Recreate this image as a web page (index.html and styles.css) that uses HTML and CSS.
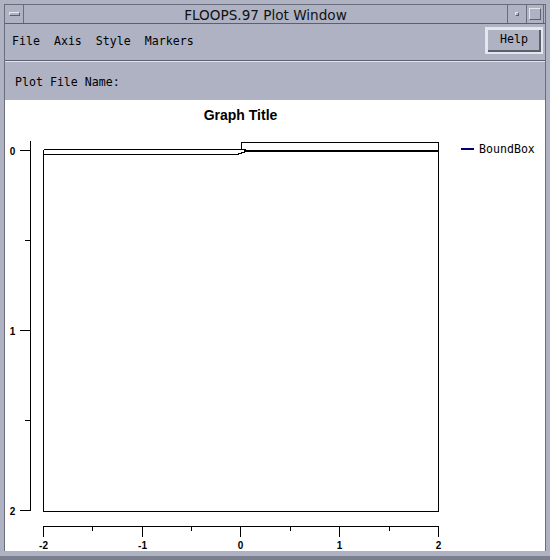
FILE: index.html
```html
<!DOCTYPE html>
<html lang="en">
<head>
    <meta charset="UTF-8" />
    <title>FLOOPS.97 Plot Window</title>
    <link rel="stylesheet" href="styles.css">
</head>
<body>
    <div class="window">
        <div class="inner">
            <div class="titlebar">
                <div class="tb-btn tb-menu"><span class="bar"></span></div>
                <div class="tb-title">FLOOPS.97 Plot Window</div>
                <div class="tb-btn tb-min"><span class="dot"></span></div>
                <div class="tb-btn tb-max"><span class="sq"></span></div>
            </div>
            <div class="menubar">
                <nav class="menus">
                    <span>File</span>
                    <span>Axis</span>
                    <span>Style</span>
                    <span>Markers</span>
                </nav>
                <button class="help">Help</button>
            </div>
            <div class="filebar">Plot File Name:</div>
            <div class="plot">
                <svg width="540" height="451" viewBox="5 100 540 451">
                    <text class="graph-title" x="240.5" y="119.5">Graph Title</text>

                    <!-- y axis -->
                    <g class="axis">
                        <line x1="30.5" y1="141" x2="30.5" y2="511" />
                        <line x1="20" y1="150.5" x2="30" y2="150.5" />
                        <line x1="25" y1="240.5" x2="30" y2="240.5" />
                        <line x1="20" y1="330.5" x2="30" y2="330.5" />
                        <line x1="25" y1="420.5" x2="30" y2="420.5" />
                        <line x1="20" y1="510.5" x2="30" y2="510.5" />
                    </g>
                    <text class="tick" x="12.5" y="154.5">0</text>
                    <text class="tick" x="12.5" y="334.5">1</text>
                    <text class="tick" x="12.5" y="514.5">2</text>

                    <!-- x axis -->
                    <g class="axis">
                        <line x1="43.5" y1="526.5" x2="438.5" y2="526.5" />
                        <line x1="43.5" y1="526" x2="43.5" y2="537" />
                        <line x1="92.5" y1="526" x2="92.5" y2="531" />
                        <line x1="142.5" y1="526" x2="142.5" y2="537" />
                        <line x1="191.5" y1="526" x2="191.5" y2="531" />
                        <line x1="240.5" y1="526" x2="240.5" y2="537" />
                        <line x1="290.5" y1="526" x2="290.5" y2="531" />
                        <line x1="339.5" y1="526" x2="339.5" y2="537" />
                        <line x1="389.5" y1="526" x2="389.5" y2="531" />
                        <line x1="438.5" y1="526" x2="438.5" y2="537" />
                    </g>
                    <text class="tick" x="43.5" y="548.5">-2</text>
                    <text class="tick" x="142.5" y="548.5">-1</text>
                    <text class="tick" x="240.5" y="548.5">0</text>
                    <text class="tick" x="339.5" y="548.5">1</text>
                    <text class="tick" x="438.5" y="548.5">2</text>

                    <!-- structure outline -->
                    <g class="outline">
                        <polyline points="43.5,149.5 43.5,511.5 438.5,511.5 438.5,142.5 241.5,142.5 241.5,149.5 43.5,149.5" />
                        <polyline points="43.5,154.5 237,154.5 246,151.5" />
                        <polyline points="241.5,149.5 250,150.5" />
                        <line class="thick" x1="244" y1="151" x2="438" y2="151" />
                    </g>

                    <!-- legend -->
                    <line class="legend-line" x1="461" y1="149" x2="474" y2="149" />
                    <text class="legend" x="479" y="153">BoundBox</text>
                </svg>
            </div>
        </div>
    </div>
</body>
</html>
```

FILE: styles.css
```css
* {
    margin: 0;
    padding: 0;
    box-sizing: border-box;
}

body {
    width: 550px;
    height: 560px;
    background-color: #aeb2c3;
}

.window {
    width: 550px;
    height: 560px;
    background-color: #aeb2c3;
    padding: 4px 4px 5px 4px;
    border-bottom: 4px solid #7c7f8e;
    display: flex;
}

.inner {
    flex: 1;
    display: flex;
    flex-direction: column;
    border-left: 1px solid #6a6d7b;
    border-right: 1px solid #6a6d7b;
}

.titlebar {
    height: 20px;
    display: flex;
    border-top: 1px solid #6a6d7b;
    border-bottom: 1px solid #5c5f6c;
}

.tb-btn {
    display: flex;
    align-items: center;
    justify-content: center;
}

.tb-menu {
    width: 19px;
    border-right: 1px solid #6a6d7b;
}

.tb-menu .bar {
    width: 11px;
    height: 4px;
    border-top: 1px solid #e6e8ef;
    border-left: 1px solid #e6e8ef;
    border-right: 1px solid #5c5f6c;
    border-bottom: 1px solid #5c5f6c;
}

.tb-title {
    flex: 1;
    text-align: center;
    font-family: "DejaVu Sans", sans-serif;
    font-size: 13.6px;
    line-height: 19px;
    color: #111;
    padding-top: 1px;
}

.tb-min {
    width: 19px;
    border-left: 1px solid #6a6d7b;
}

.tb-min .dot {
    width: 4px;
    height: 4px;
    border-top: 1px solid #e6e8ef;
    border-left: 1px solid #e6e8ef;
    border-right: 1px solid #5c5f6c;
    border-bottom: 1px solid #5c5f6c;
}

.tb-max {
    width: 18px;
    border-left: 1px solid #6a6d7b;
    border-right: 1px solid #6a6d7b;
    margin-right: 1px;
}

.tb-max .sq {
    width: 12px;
    height: 12px;
    border-top: 1px solid #e6e8ef;
    border-left: 1px solid #e6e8ef;
    border-right: 1px solid #5c5f6c;
    border-bottom: 1px solid #5c5f6c;
}

.menubar {
    height: 37px;
    display: flex;
    justify-content: space-between;
    align-items: flex-start;
    border-bottom: 1px solid #5c5f6c;
}

.menus {
    display: flex;
    gap: 14px;
    padding-left: 7px;
    font-family: "DejaVu Sans Mono", monospace;
    font-size: 11.6px;
    line-height: 35px;
    color: #000;
}

.help {
    margin-top: 3px;
    margin-right: 2px;
    width: 58px;
    height: 27px;
    background-color: #aeb2c3;
    border: 2px solid #e4e6ee;
    box-shadow: inset 1px 1px 0 #e4e6ee, inset -2px -2px 0 #5c5f6c;
    font-family: "DejaVu Sans Mono", monospace;
    font-size: 11.6px;
    color: #000;
    padding-bottom: 3px;
}

.filebar {
    height: 39px;
    border-top: 1px solid #e4e6ee;
    padding: 13px 0 0 10px;
    font-family: "DejaVu Sans Mono", monospace;
    font-size: 11.6px;
    color: #000;
}

.plot {
    flex: 1;
    background-color: #fff;
    overflow: hidden;
}

.plot svg {
    display: block;
}

.axis line,
.outline polyline,
.outline line {
    stroke: #000;
    stroke-width: 1;
    fill: none;
    shape-rendering: crispEdges;
}

.outline .thick {
    stroke-width: 2;
}

.graph-title {
    font-family: "Liberation Sans", sans-serif;
    font-weight: bold;
    font-size: 14px;
    text-anchor: middle;
}

.tick {
    font-family: "Liberation Sans", sans-serif;
    font-weight: bold;
    font-size: 10px;
    text-anchor: middle;
}

.legend-line {
    stroke: #00007a;
    stroke-width: 2;
    shape-rendering: crispEdges;
}

.legend {
    font-family: "DejaVu Sans Mono", monospace;
    font-size: 11.6px;
}
```
